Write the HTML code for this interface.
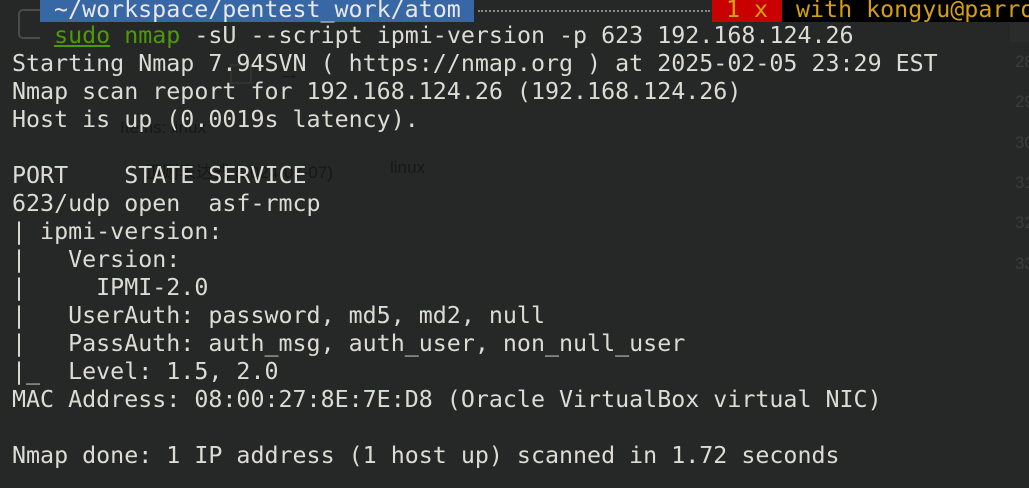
<!DOCTYPE html>
<html><head><meta charset="utf-8"><style>
html,body{margin:0;padding:0;width:1029px;height:488px;overflow:hidden;background:#262727;}
.t{position:absolute;left:12px;top:-6px;font-family:"DejaVu Sans Mono","Liberation Mono",monospace;font-size:23.3px;line-height:28px;color:#dcdcd4;white-space:pre;}
.b{position:absolute;top:-3px;font-family:"DejaVu Sans Mono","Liberation Mono",monospace;font-size:23.3px;line-height:26px;white-space:pre;}
.g{position:absolute;font-family:"Liberation Sans","Noto Sans CJK SC",sans-serif;color:#141414;opacity:.8;font-size:17px;white-space:pre;}
.n{position:absolute;left:1015px;font-family:"Liberation Sans",sans-serif;font-size:17px;color:#3c3c3c;}
</style></head><body>
<div style="position:absolute;left:1010px;top:0;width:19px;height:42px;background:#2b2b2b"></div>
<div style="position:absolute;left:18px;top:9px;width:20px;height:26px;border:2px solid #4a4a4a;border-right:none;border-radius:5px 0 0 5px"></div>
<div style="position:absolute;left:40px;top:0;width:434px;height:22px;background:#3867a6"></div>
<div style="position:absolute;left:478px;top:10px;width:232px;border-top:2px dotted #888"></div>
<div style="position:absolute;left:712px;top:0;width:70px;height:22px;background:#c80000"></div>
<div style="position:absolute;left:782px;top:0;width:247px;height:22px;background:#000"></div>
<div class="b" style="left:54px;color:#e8e8e8">~/workspace/pentest_work/atom</div>
<div class="b" style="left:726px;color:#d4a010">1 x</div>
<div class="b" style="left:796px;color:#d4a010">with kongyu@parrot</div>
<div class="g" style="left:120px;top:118px">Items: linux</div>
<div class="g" style="left:145px;top:158px">正则表达式 (2024-07-07)</div>
<div class="g" style="left:390px;top:158px">linux</div>
<div style="position:absolute;left:230px;top:64px;width:18px;height:16px;border:2px solid #3a3a3a;opacity:.6"></div>
<div class="g" style="left:278px;top:60px;font-size:22px">→</div>
<div class="n" style="top:52px">28</div>
<div class="n" style="top:92px">29</div>
<div class="n" style="top:133px">30</div>
<div class="n" style="top:173px">31</div>
<div class="n" style="top:213px">32</div>
<div class="n" style="top:254px">33</div>
<div class="t">
   <span style="color:#4e9a06;text-decoration:underline">sudo</span> <span style="color:#4e9a06">nmap</span> -sU --script ipmi-version -p 623 192.168.124.26
Starting Nmap 7.94SVN ( https://nmap.org ) at 2025-02-05 23:29 EST
Nmap scan report for 192.168.124.26 (192.168.124.26)
Host is up (0.0019s latency).

PORT    STATE SERVICE
623/udp open  asf-rmcp
| ipmi-version:
|   Version:
|     IPMI-2.0
|   UserAuth: password, md5, md2, null
|   PassAuth: auth_msg, auth_user, non_null_user
|_  Level: 1.5, 2.0
MAC Address: 08:00:27:8E:7E:D8 (Oracle VirtualBox virtual NIC)

Nmap done: 1 IP address (1 host up) scanned in 1.72 seconds</div>
</body></html>
